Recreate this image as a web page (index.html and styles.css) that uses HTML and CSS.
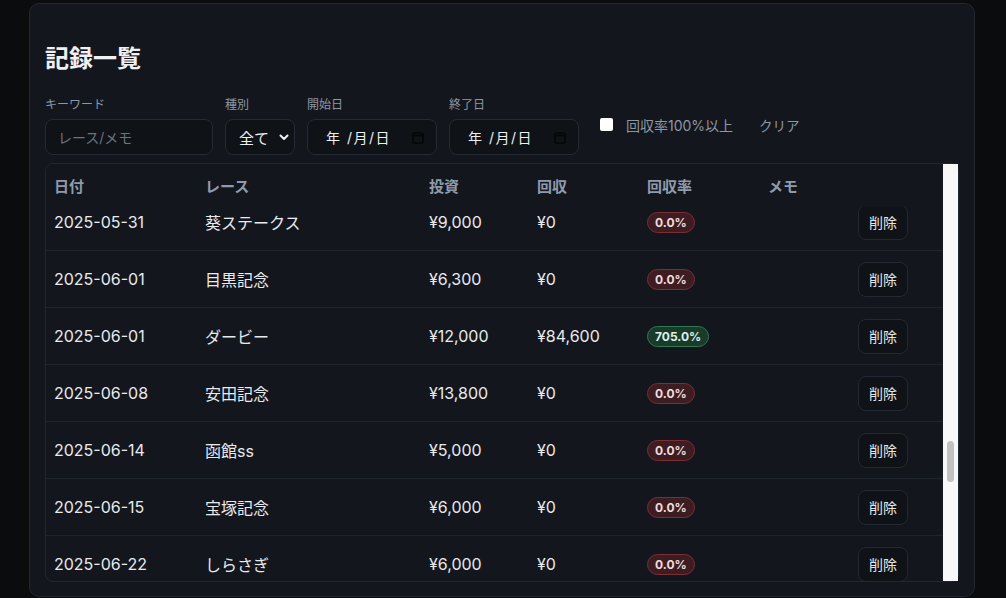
FILE: index.html
```html
<!DOCTYPE html>
<html lang="ja">
<head>
<meta charset="utf-8">
<link rel="stylesheet" href="styles.css">
</head>
<body>
<div class="card">
  <h1 class="title">記録一覧</h1>
  <div class="filters">
    <div class="field">
      <span class="label">キーワード</span>
      <div class="input kw"><span class="placeholder">レース/メモ</span></div>
    </div>
    <div class="field">
      <span class="label">種別</span>
      <div class="input sel"><span>全て</span>
        <svg width="10" height="7" viewBox="0 0 10 7"><path d="M1.5 1.5 L5 5 L8.5 1.5" fill="none" stroke="#eef0f3" stroke-width="2" stroke-linecap="round" stroke-linejoin="round"/></svg>
      </div>
    </div>
    <div class="field">
      <span class="label">開始日</span>
      <div class="input date"><span class="dtext">年 /月/日</span>
        <svg width="12" height="13" viewBox="0 0 12 13"><rect x="1" y="2" width="10" height="10" rx="1" fill="none" stroke="#050607" stroke-width="1.6"/><path d="M1 4.5 H11" stroke="#050607" stroke-width="1.6"/></svg>
      </div>
    </div>
    <div class="field">
      <span class="label">終了日</span>
      <div class="input date"><span class="dtext">年 /月/日</span>
        <svg width="12" height="13" viewBox="0 0 12 13"><rect x="1" y="2" width="10" height="10" rx="1" fill="none" stroke="#050607" stroke-width="1.6"/><path d="M1 4.5 H11" stroke="#050607" stroke-width="1.6"/></svg>
      </div>
    </div>
    <label class="check"><span class="box"></span><span>回収率100%以上</span></label>
    <span class="clear">クリア</span>
  </div>
  <div class="tablebox">
    <div class="tmain">
      <div class="row head">
        <div class="c">日付</div><div class="c">レース</div><div class="c">投資</div><div class="c">回収</div><div class="c">回収率</div><div class="c">メモ</div><div class="c"></div>
      </div>
      <div class="tbody">
        <div class="rows">
          <div class="row"><div class="c">2025-05-31</div><div class="c">葵ステークス</div><div class="c">¥9,000</div><div class="c">¥0</div><div class="c"><span class="badge bad">0.0%</span></div><div class="c"></div><div class="c"><span class="del">削除</span></div></div>
          <div class="row"><div class="c">2025-06-01</div><div class="c">目黒記念</div><div class="c">¥6,300</div><div class="c">¥0</div><div class="c"><span class="badge bad">0.0%</span></div><div class="c"></div><div class="c"><span class="del">削除</span></div></div>
          <div class="row"><div class="c">2025-06-01</div><div class="c">ダービー</div><div class="c">¥12,000</div><div class="c">¥84,600</div><div class="c"><span class="badge good">705.0%</span></div><div class="c"></div><div class="c"><span class="del">削除</span></div></div>
          <div class="row"><div class="c">2025-06-08</div><div class="c">安田記念</div><div class="c">¥13,800</div><div class="c">¥0</div><div class="c"><span class="badge bad">0.0%</span></div><div class="c"></div><div class="c"><span class="del">削除</span></div></div>
          <div class="row"><div class="c">2025-06-14</div><div class="c">函館ss</div><div class="c">¥5,000</div><div class="c">¥0</div><div class="c"><span class="badge bad">0.0%</span></div><div class="c"></div><div class="c"><span class="del">削除</span></div></div>
          <div class="row"><div class="c">2025-06-15</div><div class="c">宝塚記念</div><div class="c">¥6,000</div><div class="c">¥0</div><div class="c"><span class="badge bad">0.0%</span></div><div class="c"></div><div class="c"><span class="del">削除</span></div></div>
          <div class="row"><div class="c">2025-06-22</div><div class="c">しらさぎ</div><div class="c">¥6,000</div><div class="c">¥0</div><div class="c"><span class="badge bad">0.0%</span></div><div class="c"></div><div class="c"><span class="del">削除</span></div></div>
        </div>
      </div>
    </div>
    <div class="scrollbar"><div class="thumb"></div></div>
  </div>
</div>
</body>
</html>
```
FILE: styles.css
```css
* { box-sizing: border-box; }
html, body { margin: 0; }
body {
  background: #0b0c0e;
  padding: 3px 31px 0 29px;
  font-family: Inter, "Noto Sans CJK JP", sans-serif;
  color: #e8eaed;
  height: 598px;
  overflow: hidden;
}
.card {
  height: 594px;
  background: #13161c;
  border: 1px solid #23272f;
  border-radius: 10px;
  padding: 39px 15px 0 15px;
}
.title {
  margin: 0 0 22px;
  font-size: 24px;
  line-height: 32px;
  font-weight: 700;
  color: #eef0f3;
}
.filters {
  display: flex;
  align-items: center;
  gap: 12px;
}
.field { display: flex; flex-direction: column; gap: 6px; }
.label { font-size: 12px; line-height: 16px; color: #8d97a5; }
.input {
  height: 36px;
  border: 1px solid #252b34;
  border-radius: 8px;
  background: #0f1216;
  display: flex;
  align-items: center;
  font-size: 14px;
}
.kw { width: 168px; padding-left: 12px; }
.placeholder { color: #6b7380; font-size: 14px; }
.sel { width: 70px; padding: 0 5px 0 13px; justify-content: space-between; color: #eef0f3; font-size: 15px; }
.date { width: 130px; padding: 0 12px 0 18px; justify-content: space-between; }
.dtext { font-size: 14px; color: #eef0f3; letter-spacing: 1.5px; }
.check { display: flex; align-items: center; gap: 13px; margin-left: 9px; margin-top: -3px; font-size: 14px; color: #8d97a5; }
.box { width: 13px; height: 13px; background: #fff; border-radius: 2px; }
.clear { font-size: 13.5px; color: #8d97a5; margin-left: 14px; margin-top: -3px; }
.tablebox {
  margin-top: 8px;
  height: 419px;
  border: 1px solid #232830;
  border-radius: 8px;
  display: flex;
}
.tmain { flex: 1; display: flex; flex-direction: column; border-radius: 8px 0 0 8px; overflow: hidden; }
.row {
  display: grid;
  grid-template-columns: 151px 224px 108px 110px 121px 90px 1fr;
  align-items: center;
  height: 57px;
  border-bottom: 1px solid #1f252d;
  font-size: 16px;
}
.row .c { padding-left: 8px; white-space: nowrap; }
.row.head {
  height: 43px;
  border-bottom: none;
  font-size: 15px;
  font-weight: 700;
  color: #8f9bac;
  position: relative;
  z-index: 1;
  background: #13161c;
}
.tbody { flex: 1; overflow: hidden; }
.rows { margin-top: -13px; }
.badge {
  display: inline-block;
  font-size: 12px;
  font-weight: 700;
  line-height: 17px;
  padding: 1px 7px;
  border-radius: 999px;
  border: 1px solid;
}
.bad { background: #3e1d22; border-color: #7b2f35; color: #f1dcdc; }
.good { background: #1a3a2c; border-color: #2f7a4f; color: #dff1e6; }
.del {
  display: inline-flex;
  align-items: center;
  height: 35px;
  padding: 0 10px;
  border: 1px solid #232932;
  border-radius: 8px;
  background: #0f1216;
  font-size: 14px;
  color: #e3e6ea;
}
.scrollbar {
  width: 15px;
  background: #f8f8f8;
  padding: 277px 4px 0 4px;
}
.thumb { height: 41px; border-radius: 4px; background: #c1c1c1; }
```
